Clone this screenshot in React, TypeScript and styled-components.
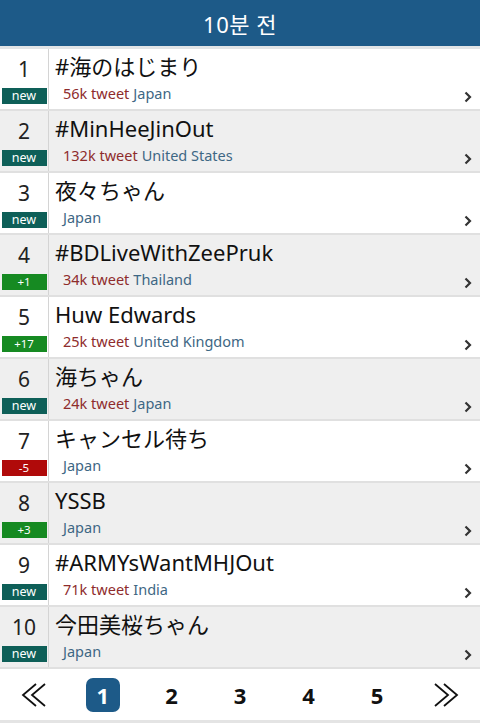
import React from 'react';
import styled, { createGlobalStyle } from 'styled-components';

type Trend = {
    title: string;
    tweets?: string;
    country: string;
    badge: string;
};

type BadgeProps = {
    kind: 'new' | 'up' | 'down';
}

type RowProps = {
    shaded: boolean;
}

type PageProps = {
    active?: boolean;
}

const trends: Trend[] = [
    { title: '#海のはじまり', tweets: '56k tweet', country: 'Japan', badge: 'new' },
    { title: '#MinHeeJinOut', tweets: '132k tweet', country: 'United States', badge: 'new' },
    { title: '夜々ちゃん', country: 'Japan', badge: 'new' },
    { title: '#BDLiveWithZeePruk', tweets: '34k tweet', country: 'Thailand', badge: '+1' },
    { title: 'Huw Edwards', tweets: '25k tweet', country: 'United Kingdom', badge: '+17' },
    { title: '海ちゃん', tweets: '24k tweet', country: 'Japan', badge: 'new' },
    { title: 'キャンセル待ち', country: 'Japan', badge: '-5' },
    { title: 'YSSB', country: 'Japan', badge: '+3' },
    { title: '#ARMYsWantMHJOut', tweets: '71k tweet', country: 'India', badge: 'new' },
    { title: '今田美桜ちゃん', country: 'Japan', badge: 'new' },
];

const GlobalStyle = createGlobalStyle`
    body{
        margin: 0;
        background: #fff;
        font-family: "Noto Sans", "Noto Sans CJK JP", sans-serif;
    }
`

const Page = styled.div`
    width: 480px;
    height: 728px;
    overflow: hidden;
    background: #fff;
`

const Header = styled.header`
    height: 46px;
    background: #1d5a88;
    border-bottom: 3px solid #e2e4e6;
    color: #fff;
    display: flex;
    align-items: center;
    justify-content: center;
    font-size: 22px;
    letter-spacing: 0.5px;
`

const Row = styled.div<RowProps>`
    height: 60px;
    display: flex;
    background: ${(props) => props.shaded ? '#efefef' : '#fff'};
    border-bottom: 2px solid #e0e0e0;
    position: relative;
`

const RankCol = styled.div`
    width: 49px;
    border-right: 1px solid #d4d4d4;
    display: flex;
    flex-direction: column;
    align-items: center;
    padding-top: 6px;
    box-sizing: border-box;
`

const Rank = styled.div`
    font-size: 21px;
    line-height: 28px;
    color: #222;
    height: 33px;
`

const Badge = styled.div<BadgeProps>`
    width: 45px;
    height: 16px;
    line-height: 16px;
    text-align: center;
    color: #fff;
    font-size: ${(props) => props.kind === 'new' ? '12.5px' : '11.5px'};
    background: ${(props) => props.kind === 'new' ? '#0e5f58' : props.kind === 'up' ? '#168a22' : '#b00a0a'};
`

const Info = styled.div`
    flex: 1;
    padding-left: 6px;
    padding-top: 2px;
`

const Title = styled.div`
    font-size: 22px;
    line-height: 30px;
    color: #111;
    white-space: nowrap;
`

const Sub = styled.div`
    padding-left: 8px;
    font-size: 14.5px;
    line-height: 24px;
    display: flex;
    gap: 4px;
`

const Tweets = styled.span`
    color: #8e2c2c;
`

const Country = styled.span`
    color: #3e6784;
`

const Chevron = styled.svg`
    position: absolute;
    right: 8px;
    bottom: 6px;
`

const Pager = styled.nav`
    height: 51px;
    display: grid;
    grid-template-columns: repeat(7, 1fr);
    align-items: center;
    justify-items: center;
    border-bottom: 3px solid #e4e4e4;
`

const PageNum = styled.div<PageProps>`
    width: 34px;
    height: 34px;
    border-radius: 7px;
    display: flex;
    align-items: center;
    justify-content: center;
    font-size: 22px;
    font-weight: bold;
    color: ${(props) => props.active ? '#fff' : '#111'};
    background: ${(props) => props.active ? '#1d5a88' : 'transparent'};
`

const badgeKind = (b: string): BadgeProps['kind'] =>
    b === 'new' ? 'new' : b.startsWith('-') ? 'down' : 'up';

const Arrows = ({ flip }: { flip?: boolean }) => (
    <svg width="26" height="24" viewBox="0 0 26 24" style={{ transform: flip ? 'scaleX(-1)' : undefined }}>
        <path d="M15 1 L2 12 L15 23 M24 1 L11 12 L24 23" fill="none" stroke="#111" strokeWidth="1.8" />
    </svg>
);

export default function App() {
    return (
        <Page>
            <GlobalStyle />
            <Header>10분 전</Header>
            {trends.map((t, i) => (
                <Row key={i} shaded={i % 2 === 1}>
                    <RankCol>
                        <Rank>{i + 1}</Rank>
                        <Badge kind={badgeKind(t.badge)}>{t.badge}</Badge>
                    </RankCol>
                    <Info>
                        <Title>{t.title}</Title>
                        <Sub>
                            {t.tweets && <Tweets>{t.tweets}</Tweets>}
                            <Country>{t.country}</Country>
                        </Sub>
                    </Info>
                    <Chevron width="8" height="12" viewBox="0 0 8 12">
                        <path d="M1.5 1.5 L6 6 L1.5 10.5" fill="none" stroke="#333" strokeWidth="2.2" />
                    </Chevron>
                </Row>
            ))}
            <Pager>
                <Arrows />
                <PageNum active>1</PageNum>
                <PageNum>2</PageNum>
                <PageNum>3</PageNum>
                <PageNum>4</PageNum>
                <PageNum>5</PageNum>
                <Arrows flip />
            </Pager>
        </Page>
    );
}
